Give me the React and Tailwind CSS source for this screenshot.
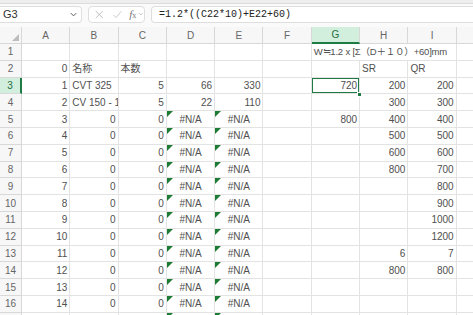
import React from 'react';

const COLS = ['A', 'B', 'C', 'D', 'E', 'F', 'G', 'H', 'I', 'J'];

// cell map: key "B3" -> { v, align }
const cells = {
  A2: { v: '0' }, B2: { v: '名称', align: 'left' }, C2: { v: '本数', align: 'left' },
  A3: { v: '1' }, B3: { v: 'CVT 325', align: 'left' }, C3: { v: '5' }, D3: { v: '66' }, E3: { v: '330' }, G3: { v: '720' },
  A4: { v: '2' }, B4: { v: 'CV 150 - 1', align: 'left' }, C4: { v: '5' }, D4: { v: '22' }, E4: { v: '110' },
  G5: { v: '800' },
  H2: { v: 'SR', align: 'left' }, I2: { v: 'QR', align: 'left' },
};

[200, 300, 400, 500, 600, 800].forEach((n, i) => { cells['H' + (i + 3)] = { v: String(n) }; });
[200, 300, 400, 500, 600, 700, 800, 900, 1000, 1200].forEach((n, i) => { cells['I' + (i + 3)] = { v: String(n) }; });
cells.H13 = { v: '6' }; cells.I13 = { v: '7' };
cells.H14 = { v: '800' }; cells.I14 = { v: '800' };

for (let r = 5; r <= 17; r++) {
  cells['A' + r] = { v: String(r - 2) };
  cells['B' + r] = { v: '0' };
  cells['C' + r] = { v: '0' };
  cells['D' + r] = { v: '#N/A', align: 'center', err: true };
  cells['E' + r] = { v: '#N/A', align: 'center', err: true };
}

function Cell({ id }) {
  const c = cells[id];
  const selected = id === 'G3';
  const align = c?.align === 'left' ? 'justify-start' : c?.align === 'center' ? 'justify-center' : 'justify-end';
  return (
    <div className={`relative flex items-center ${align} px-[2px] border-r border-b border-[#e3e3e3] overflow-hidden whitespace-nowrap text-[10px] text-[#505050]`}>
      {c?.err && (
        <span className="absolute left-0 top-0 w-0 h-0 border-t-[6px] border-r-[6px] border-t-[#1e7b34] border-r-transparent" />
      )}
      {c?.v}
      {selected && (
        <span className="absolute inset-[-1px] border-2 border-[#1f7a44] pointer-events-none" />
      )}
    </div>
  );
}

export default function App() {
  const rows = Array.from({ length: 17 }, (_, i) => i + 1);
  return (
    <div className="w-[473px] h-[315px] overflow-hidden bg-white relative" style={{ fontFamily: '"Liberation Sans", "Noto Sans CJK JP", sans-serif' }}>
      <div className="h-[4px] bg-[#eeeeee] border-b border-[#dcdcdc]" />
      <div className="h-[20px] flex items-center bg-[#fafafa] gap-[6px]">
        <div className="w-[82px] h-[17px] bg-white border border-l-0 border-[#dedede] rounded-r-[4px] flex items-center justify-between pl-[3px] pr-[3px] text-[11px] text-[#333]">
          <span>G3</span>
          <svg width="9" height="9" viewBox="0 0 10 10" fill="none" stroke="#555" strokeWidth="1.1"><path d="M2 3.5 L5 6.5 L8 3.5" /></svg>
        </div>
        <div className="w-[57px] h-[17px] bg-white border border-[#dedede] rounded-[4px] flex items-center pl-[5px] gap-[7px]">
          <svg width="11" height="11" viewBox="0 0 12 12" fill="none" stroke="#b8b8b8" strokeWidth="1"><path d="M2 2 L10 10 M10 2 L2 10" /></svg>
          <svg width="11" height="11" viewBox="0 0 12 12" fill="none" stroke="#c4c4c4" strokeWidth="1"><path d="M1.5 6.5 L4.5 9.5 L10.5 2.5" /></svg>
          <span className="text-[11px] italic text-[#777] leading-none" style={{ fontFamily: '"Liberation Serif", serif' }}>f<span className="text-[8px] not-italic">x</span></span>
          <svg width="6" height="6" viewBox="0 0 10 10" fill="none" stroke="#aaa" strokeWidth="1.2" className="-ml-[5px]"><path d="M2 3.5 L5 6.5 L8 3.5" /></svg>
        </div>
        <div className="flex-1 h-[17px] bg-white border border-r-0 border-[#dedede] rounded-l-[4px] flex items-center pl-[7px] text-[10px] text-[#222]" style={{ fontFamily: '"Liberation Mono", monospace' }}>
          =1.2*((C22*10)+E22+60)
        </div>
      </div>
      <div className="h-[3px] bg-[#fafafa]" />
      <div className="grid" style={{ gridTemplateColumns: '22px repeat(10, 48.3px)', gridTemplateRows: '17px repeat(17, 16.8px)' }}>
        <div className="relative bg-[#f7f7f7] border-r border-b border-[#d8d8d8]">
          <span className="absolute right-[2px] bottom-[2px] w-0 h-0 border-b-[7px] border-l-[7px] border-b-[#bdbdbd] border-l-transparent" />
        </div>
        {COLS.map((c) => (
          <div key={c} className={`flex items-center justify-center text-[10px] ${c === 'G' ? 'bg-[#d2eedd] text-[#1f6e3f] border-b-2 border-b-[#1f7a44] border-r border-r-[#d8d8d8]' : 'bg-[#f7f7f7] text-[#666] border-r border-b border-[#d8d8d8]'}`}>
            {c}
          </div>
        ))}
        {rows.map((r) => (
          <React.Fragment key={r}>
            <div className={`flex items-center justify-center text-[10px] ${r === 3 ? 'bg-[#d2eedd] text-[#1f6e3f] border-r-2 border-r-[#1f7a44] border-b border-b-[#d8d8d8]' : 'bg-[#f7f7f7] text-[#666] border-r border-b border-[#d8d8d8]'}`}>
              {r}
            </div>
            {r === 1 ? (
              <>
                {COLS.slice(0, 6).map((c) => <Cell key={c} id={c + r} />)}
                <div className="col-span-3 flex items-center px-[2px] border-r border-b border-[#e3e3e3] whitespace-nowrap text-[9.5px] tracking-[-0.2px] text-[#505050]">
                  W≒1.2 x [Σ（D＋１０）+60]mm
                </div>
                <Cell id={'J' + r} />
              </>
            ) : (
              COLS.map((c) => <Cell key={c} id={c + r} />)
            )}
          </React.Fragment>
        ))}
      </div>
      <span className="absolute left-[357px] top-[92px] w-[5px] h-[5px] bg-[#1f7a44] border border-white" />
    </div>
  );
}
